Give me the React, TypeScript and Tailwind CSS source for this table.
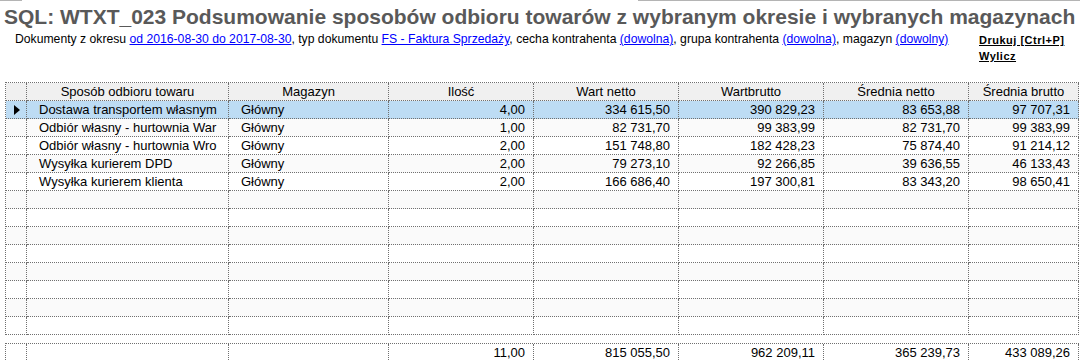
import React from 'react';

const cols = 'grid grid-cols-[21px_202px_160px_145px_145px_145px_145px_110px]';
const cell = 'h-[18px] border-r border-b border-dotted border-[#707070] text-[13px] leading-[17px] whitespace-nowrap overflow-hidden';

type Row = [string, string, string, string, string, string, string];

const rows: Row[] = [
  ['Dostawa transportem własnym', 'Główny', '4,00', '334 615,50', '390 829,23', '83 653,88', '97 707,31'],
  ['Odbiór własny - hurtownia War', 'Główny', '1,00', '82 731,70', '99 383,99', '82 731,70', '99 383,99'],
  ['Odbiór własny - hurtownia Wro', 'Główny', '2,00', '151 748,80', '182 428,23', '75 874,40', '91 214,12'],
  ['Wysyłka kurierem DPD', 'Główny', '2,00', '79 273,10', '92 266,85', '39 636,55', '46 133,43'],
  ['Wysyłka kurierem klienta', 'Główny', '2,00', '166 686,40', '197 300,81', '83 343,20', '98 650,41'],
];

const headers = ['Sposób odbioru towaru', 'Magazyn', 'Ilość', 'Wart netto', 'Wartbrutto', 'Średnia netto', 'Średnia brutto'];

function DataRow({ row, index }: { row?: Row; index: number }) {
  const bg = index === 0 ? 'bg-[#bddcf4]' : index % 2 === 1 ? 'bg-[#fafafa]' : 'bg-white';
  return (
    <>
      <div className={`${cell} ${bg} flex items-center justify-center`}>
        {index === 0 && (
          <svg width="6" height="10" viewBox="0 0 6 10" className="ml-[2px]">
            <polygon points="0,0 6,5 0,10" fill="#000" />
          </svg>
        )}
      </div>
      {row ? (
        row.map((v, i) => (
          <div key={i} className={`${cell} ${bg} ${i < 2 ? 'pl-3 text-left' : 'pr-2 text-right'}`}>
            {v}
          </div>
        ))
      ) : (
        Array.from({ length: 7 }).map((_, i) => <div key={i} className={`${cell} ${bg}`} />)
      )}
    </>
  );
}

export default function App() {
  const body = Array.from({ length: 13 });
  return (
    <div className="w-[1080px] h-[361px] bg-white overflow-hidden text-black font-['Liberation_Sans',Arial,sans-serif]">
      <div className="flex h-px">
        <div className="w-[22px] bg-[#b4b4b4]" />
        <div className="w-[616px]" />
        <div className="flex-1 bg-[#b4b4b4]" />
      </div>

      <h1 className="mt-[5px] ml-[4px] text-[21px] leading-[22px] font-bold text-[#595959] whitespace-nowrap">
        SQL: WTXT_023 Podsumowanie sposobów odbioru towarów z wybranym okresie i wybranych magazynach
      </h1>

      <div className="flex mt-[4px] h-[50px]">
        <p className="ml-[15px] w-[964px] shrink-0 text-[12.2px] leading-[14px] whitespace-nowrap">
          Dokumenty z okresu <a className="text-[#0000ff] underline">od 2016-08-30 do 2017-08-30</a>, typ dokumentu{' '}
          <a className="text-[#0000ff] underline">FS - Faktura Sprzedaży</a>, cecha kontrahenta{' '}
          <a className="text-[#0000ff] underline">(dowolna)</a>, grupa kontrahenta{' '}
          <a className="text-[#0000ff] underline">(dowolna)</a>, magazyn{' '}
          <a className="text-[#0000ff] underline">(dowolny)</a>
        </p>
        <div className="flex flex-col shrink-0 gap-[4px] pt-[2px] text-[11px] leading-[12px] tracking-[0.5px] font-bold whitespace-nowrap">
          <a className="underline">Drukuj [Ctrl+P]</a>
          <a className="underline">Wylicz</a>
        </div>
      </div>

      <div className="ml-[5px] w-[1074px]">
        <div className={`${cols} border-l border-t border-dotted border-[#707070]`}>
          <div className={`${cell} bg-[#f0f0f0]`} />
          {headers.map((h) => (
            <div key={h} className={`${cell} bg-[#f0f0f0] text-center`}>
              {h}
            </div>
          ))}
          {body.map((_, i) => (
            <DataRow key={i} index={i} row={rows[i]} />
          ))}
        </div>

        <div className={`${cols} mt-[8px] border-l border-t border-dotted border-[#707070]`}>
          <div className={cell} />
          <div className={cell} />
          <div className={cell} />
          {['11,00', '815 055,50', '962 209,11', '365 239,73', '433 089,26'].map((v) => (
            <div key={v} className={`${cell} pr-2 text-right`}>
              {v}
            </div>
          ))}
        </div>
      </div>
    </div>
  );
}
